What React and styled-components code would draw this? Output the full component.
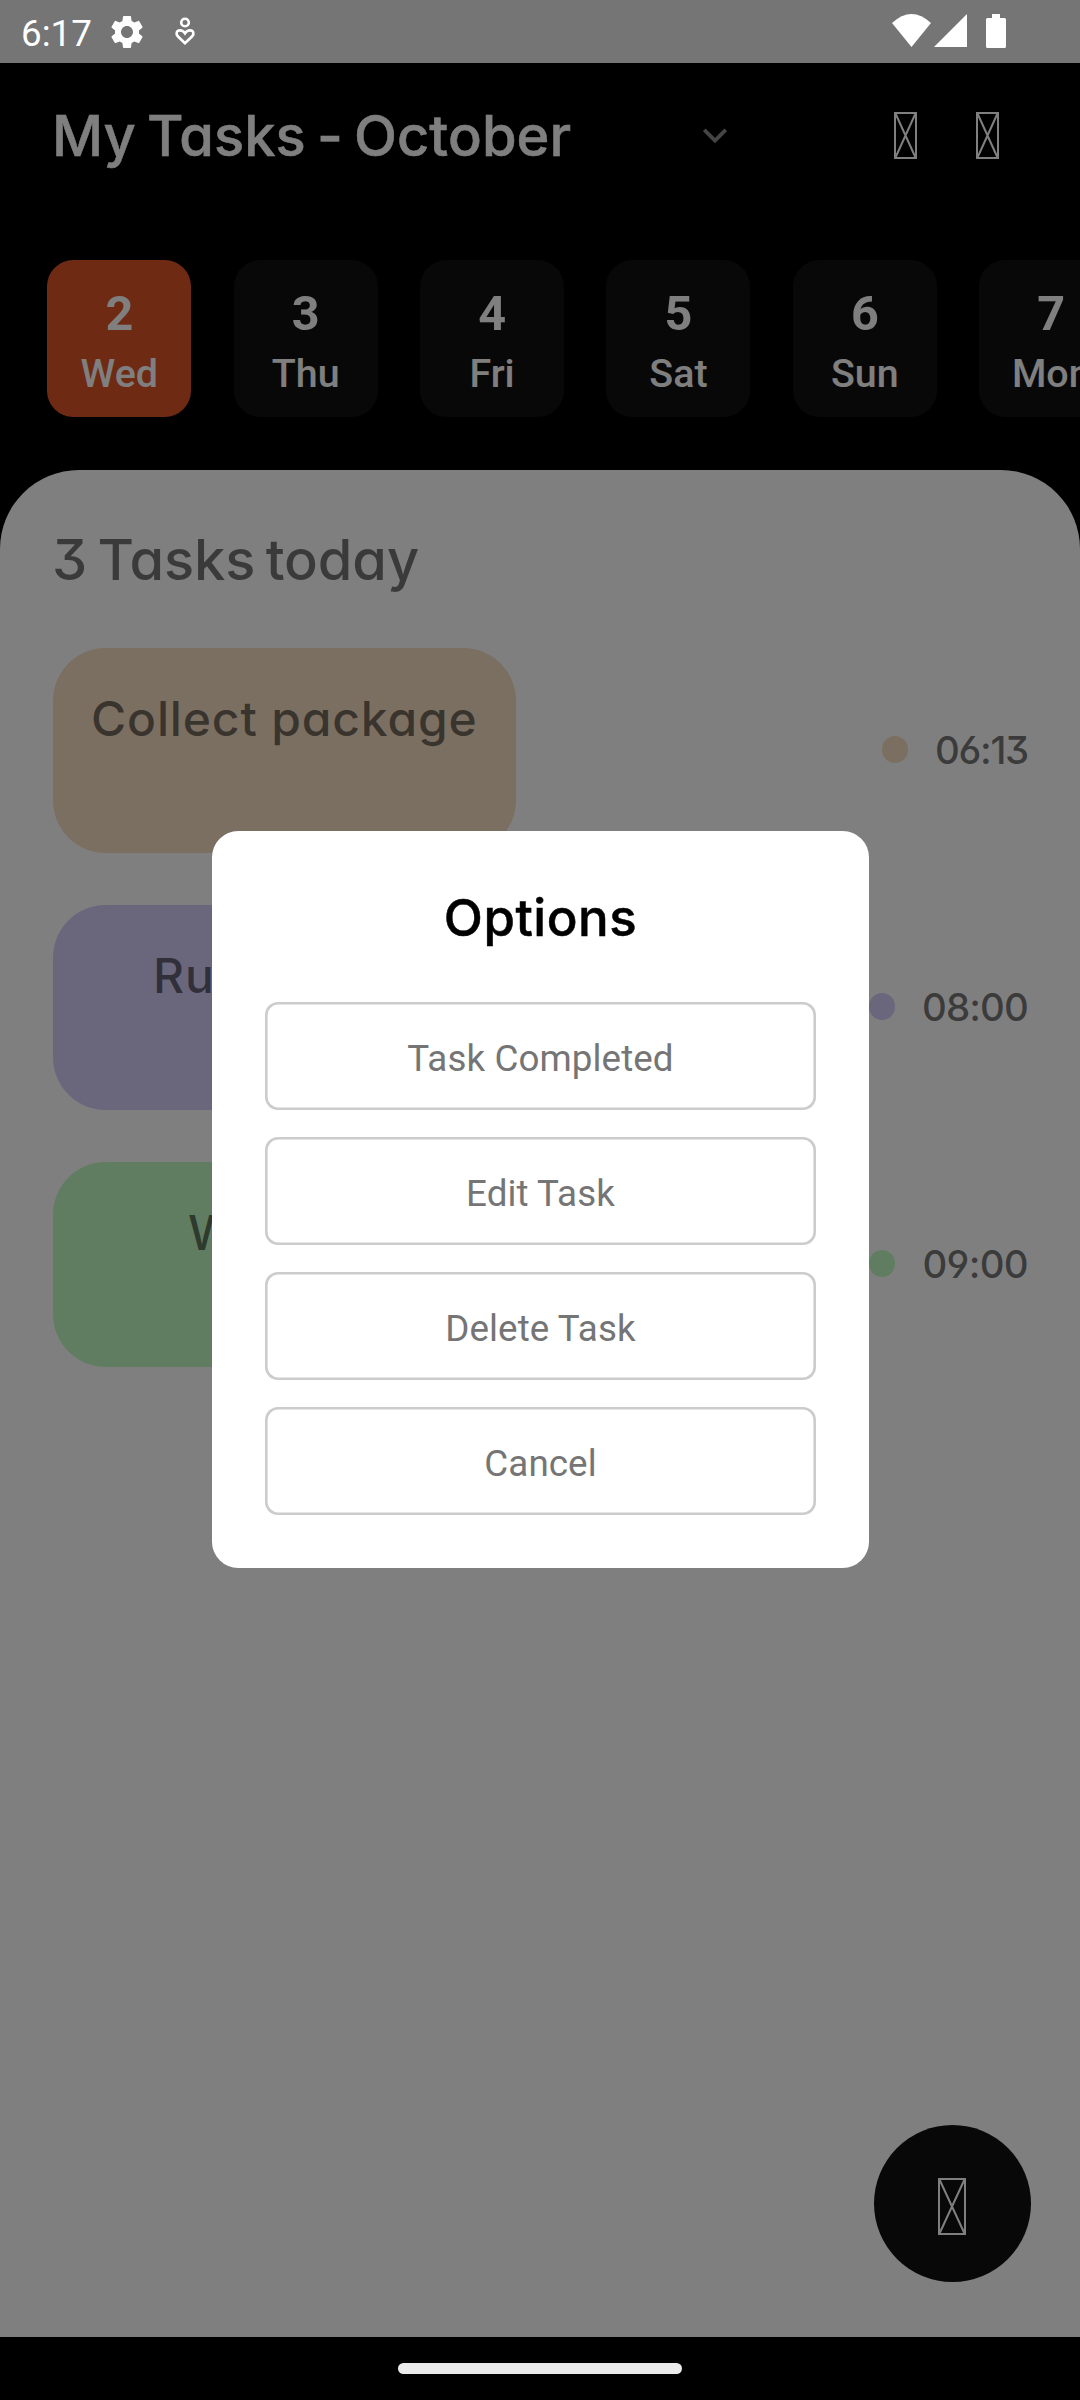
import React from "react";
import styled, { createGlobalStyle } from "styled-components";
import { MdSettings } from "react-icons/md";

const Global = createGlobalStyle`
  *, *::before, *::after { box-sizing: border-box; }
  body { margin: 0; background: #000; }
`;

const display = `
  font-family: Inter, "Liberation Sans", sans-serif;
  font-weight: 500;
  font-feature-settings: "cv11" 1, "cv09" 1, "cv03" 1, "cv04" 1;
  white-space: nowrap;
`;
const body = `
  font-family: Roboto, "Liberation Sans", sans-serif;
  white-space: nowrap;
`;

const Screen = styled.div`
  position: relative;
  width: 1080px;
  height: 2400px;
  overflow: hidden;
  display: flex;
  flex-direction: column;
  background: #000;
`;

/* status bar */
const StatusBar = styled.header`
  position: relative;
  z-index: 2;
  flex: none;
  height: 63px;
  padding: 0 73px 0 21px;
  display: flex;
  align-items: center;
  justify-content: space-between;
  background: #757575;
  color: #fff;
`;
const StatusGroup = styled.div`
  display: flex;
  align-items: center;
  height: 63px;
`;
const Clock = styled.span`
  ${body}
  width: 71px;
  margin-right: 15px;
  font-size: 36.75px;
  line-height: 63px;
  padding-top: 3px;
`;
const Gear = styled(MdSettings)`
  width: 40px;
  height: 40px;
`;
const Glyph = styled.svg`
  display: block;
  flex: none;
`;

/* title row */
const TitleBar = styled.div`
  flex: none;
  height: 145px;
  padding: 0 81px 0 52px;
  display: flex;
  align-items: center;
`;
const Title = styled.h1`
  ${display}
  margin: 0;
  width: 651px;
  font-size: 56px;
  line-height: 70px;
  letter-spacing: 0.1px;
  word-spacing: -4px;
  -webkit-text-stroke: 0.5px currentColor;
  color: #fff;
`;
const Actions = styled.div`
  margin-left: auto;
  display: flex;
  gap: 59px;
`;

/* day strip */
const Days = styled.div`
  flex: none;
  height: 262px;
  padding: 52px 0 0 47.3px;
  display: flex;
  gap: 42.4px;
`;
const Day = styled.div`
  ${body}
  flex: none;
  width: 144px;
  height: 157px;
  padding-top: 26px;
  border-radius: 26.25px;
  background: ${(p) => (p.$active ? "#de5428" : "#101010")};
  color: #fff;
  text-align: center;
`;
const DayNumber = styled.div`
  font-size: 48.5px;
  font-weight: 700;
  line-height: 56px;
`;
const DayName = styled.div`
  margin-top: 8px;
  font-size: 39.4px;
  font-weight: 500;
  line-height: 47px;
`;

/* task sheet */
const Sheet = styled.main`
  flex: 1;
  padding: 55px 49px 55px 53px;
  display: flex;
  flex-direction: column;
  border-radius: 79px 79px 0 0;
  background: #fff;
  color: rgba(0, 0, 0, 0.54);
`;
const SheetTitle = styled.h2`
  ${display}
  margin: 0 0 53px -1px;
  font-size: 56px;
  line-height: 70px;
  letter-spacing: -0.1px;
  word-spacing: -4.5px;
`;
const TaskList = styled.div`
  display: flex;
  flex-direction: column;
  gap: 52px;
`;
const TaskRow = styled.div`
  display: flex;
  align-items: center;
  justify-content: space-between;
  padding-right: 3px;
`;
const TaskCard = styled.div`
  ${display}
  width: 463px;
  height: 205px;
  padding: 40px 0 0 ${(p) => p.$indent}px;
  border-radius: 52.5px;
  background: ${(p) => p.$color};
  font-size: 48px;
  line-height: 61px;
  letter-spacing: 0.85px;
`;
const Time = styled.div`
  ${display}
  display: flex;
  align-items: center;
  gap: 27px;
  padding-bottom: 2px;
  font-size: 38.5px;
  line-height: 48px;
  letter-spacing: ${(p) => p.$track}px;
`;
const Dot = styled.span`
  width: 26.25px;
  height: 26.25px;
  border-radius: 50%;
  background: ${(p) => p.$color};
`;
const AddButton = styled.button`
  width: 157.5px;
  height: 157.5px;
  margin: auto 0 0;
  padding: 7px 0 0;
  align-self: flex-end;
  display: flex;
  align-items: center;
  justify-content: center;
  border: 0;
  border-radius: 50%;
  background: #101010;
`;

/* navigation bar */
const NavBar = styled.footer`
  position: relative;
  z-index: 2;
  flex: none;
  height: 63px;
  display: flex;
  align-items: center;
  justify-content: center;
  background: #000;
`;
const NavHandle = styled.div`
  width: 284px;
  height: 11px;
  border-radius: 6px;
  background: #ebebeb;
`;

/* dialog */
const Scrim = styled.div`
  position: absolute;
  inset: 0;
  z-index: 1;
  display: flex;
  align-items: center;
  justify-content: center;
  padding: 0 0 1px 1px;
  background: rgba(0, 0, 0, 0.5);
`;
const Dialog = styled.section`
  width: 657px;
  height: 737px;
  padding: 52px 53px;
  display: flex;
  flex-direction: column;
  border-radius: 26.25px;
  background: #fff;
`;
const DialogTitle = styled.h3`
  ${display}
  margin: 0 0 50px;
  font-size: 51px;
  line-height: 69px;
  letter-spacing: 0.5px;
  -webkit-text-stroke: 0.5px currentColor;
  text-align: center;
  color: #000;
`;
const Choices = styled.div`
  display: flex;
  flex-direction: column;
  gap: 27px;
`;
const Choice = styled.button`
  ${body}
  height: 108px;
  padding: 6px 0 0;
  border: 0;
  border-radius: 13px;
  background: #fff;
  box-shadow: inset 0 0 0 2.6px #ccc;
  font-size: 36.75px;
  line-height: 44px;
  letter-spacing: 0.1px;
  color: #757575;
`;

function MissingGlyph({ w, h }) {
  return (
    <Glyph width={w} height={h} viewBox={`0 0 ${w} ${h}`} fill="none" stroke="#fff" strokeWidth="2">
      <rect x="1" y="1" width={w - 2} height={h - 2} />
      <path d={`M1.5 1.5L${w - 1.5} ${h - 1.5}M${w - 1.5} 1.5L1.5 ${h - 1.5}`} />
    </Glyph>
  );
}

const days = [
  [2, "Wed"],
  [3, "Thu"],
  [4, "Fri"],
  [5, "Sat"],
  [6, "Sun"],
  [7, "Mon"],
];
const tasks = [
  { name: "Collect package", time: "06:13", color: "#f6dec2", indent: 38, track: -1.3 },
  { name: "Ru", time: "08:00", color: "#d4cefa", indent: 100, track: -0.9 },
  { name: "W", time: "09:00", color: "#c3fac3", indent: 135, track: -0.7 },
];
const choices = ["Task Completed", "Edit Task", "Delete Task", "Cancel"];

export default function App() {
  return (
    <Screen>
      <Global />
      <StatusBar>
        <StatusGroup>
          <Clock>6:17</Clock>
          <Gear />
          <Glyph width="76" height="63" viewBox="147 0 76 63" fill="none" stroke="#fff" strokeWidth="2.6">
            <circle cx="185" cy="22.5" r="3.8" />
            <path d="M185 43.2L178 36.5C175.3 33.8 176.6 30.4 180 30.4C182.4 30.4 184 31.8 185 33.4C186 31.8 187.6 30.4 190 30.4C193.4 30.4 194.7 33.8 192 36.5Z" />
          </Glyph>
        </StatusGroup>
        <Glyph width="115" height="63" viewBox="892 0 115 63" fill="#fff">
          <path d="M892 23Q911.5 5 931 23L911.5 47Z" />
          <path d="M934 47L967 14V47Z" />
          <path d="M992 14h8v4h4.5q1.500 0 1.500 1.500V46.500q0 1.500-1.500 1.500h-17q-1.500 0-1.500-1.500V19.500q0-1.500 1.500-1.500H992Z" />
        </Glyph>
      </StatusBar>

      <TitleBar>
        <Title>My Tasks - October</Title>
        <Glyph width="24" height="16" viewBox="0 0 24 16" fill="none" stroke="#8a8a8a" strokeWidth="3.8">
          <path d="M1.300 1.800L12 12.500L22.700 1.800" />
        </Glyph>
        <Actions>
          <MissingGlyph w={23} h={47} />
          <MissingGlyph w={23} h={47} />
        </Actions>
      </TitleBar>

      <Days>
        {days.map(([number, name], i) => (
          <Day key={number} $active={i === 0}>
            <DayNumber>{number}</DayNumber>
            <DayName>{name}</DayName>
          </Day>
        ))}
      </Days>

      <Sheet>
        <SheetTitle>3 Tasks today</SheetTitle>
        <TaskList>
          {tasks.map((t) => (
            <TaskRow key={t.time}>
              <TaskCard $color={t.color} $indent={t.indent}>
                {t.name}
              </TaskCard>
              <Time $track={t.track}>
                <Dot $color={t.color} />
                {t.time}
              </Time>
            </TaskRow>
          ))}
        </TaskList>
        <AddButton aria-label="Add task">
          <MissingGlyph w={28} h={57} />
        </AddButton>
      </Sheet>

      <NavBar>
        <NavHandle />
      </NavBar>

      <Scrim>
        <Dialog role="dialog">
          <DialogTitle>Options</DialogTitle>
          <Choices>
            {choices.map((c) => (
              <Choice key={c}>{c}</Choice>
            ))}
          </Choices>
        </Dialog>
      </Scrim>
    </Screen>
  );
}
